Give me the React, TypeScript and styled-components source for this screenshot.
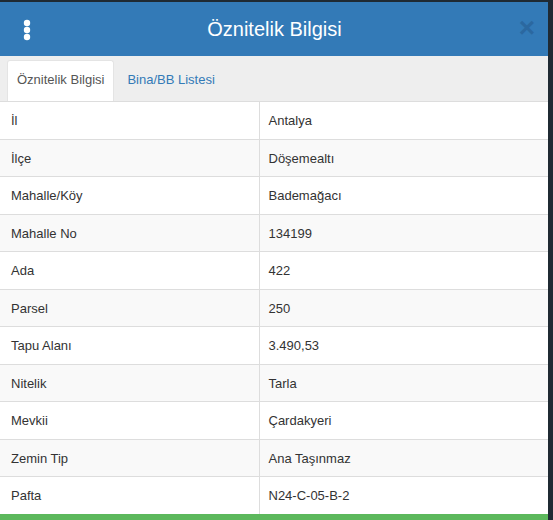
import React from 'react'
import styled, { createGlobalStyle } from 'styled-components'

const rows: [string, string][] = [
    ['İl', 'Antalya'],
    ['İlçe', 'Döşemealtı'],
    ['Mahalle/Köy', 'Bademağacı'],
    ['Mahalle No', '134199'],
    ['Ada', '422'],
    ['Parsel', '250'],
    ['Tapu Alanı', '3.490,53'],
    ['Nitelik', 'Tarla'],
    ['Mevkii', 'Çardakyeri'],
    ['Zemin Tip', 'Ana Taşınmaz'],
    ['Pafta', 'N24-C-05-B-2'],
]

const App: React.FC = () => {
    return (
        <>
            <GlobalStyle />
            <StModal>
                <StHeader>
                    <StMenuButton aria-label="menu">
                        <svg width="8" height="22" viewBox="0 0 8 22">
                            <circle cx="4" cy="4" r="3.2" fill="#fff" />
                            <circle cx="4" cy="11" r="3.2" fill="#fff" />
                            <circle cx="4" cy="18" r="3.2" fill="#fff" />
                        </svg>
                    </StMenuButton>
                    <StTitle>Öznitelik Bilgisi</StTitle>
                    <StClose aria-label="close">×</StClose>
                </StHeader>
                <StTabs>
                    <StTab $active>Öznitelik Bilgisi</StTab>
                    <StTab>Bina/BB Listesi</StTab>
                </StTabs>
                <StTable>
                    <tbody>
                        {rows.map(([k, v], i) => (
                            <StRow key={k} $striped={i % 2 === 1}>
                                <StKey>{k}</StKey>
                                <StValue>{v}</StValue>
                            </StRow>
                        ))}
                    </tbody>
                </StTable>
                <StFooter />
            </StModal>
        </>
    )
}

const GlobalStyle = createGlobalStyle`
    html, body {
        margin: 0;
        height: 100%;
        background: #1f2a33;
    }
    body, table {
        font-family: 'Liberation Sans', Arial, sans-serif;
    }
`

const StModal = styled.div`
    width: 548px;
    margin-top: 2px;
    background: #fff;
    display: flex;
    flex-direction: column;
    overflow: hidden;
`

const StHeader = styled.div`
    height: 54px;
    background: #337ab7;
    display: flex;
    align-items: center;
    padding: 0 8px 0 23px;
`

const StMenuButton = styled.div`
    width: 8px;
    display: flex;
    align-items: center;
    margin-top: 2px;
`

const StTitle = styled.div`
    flex: 1;
    text-align: center;
    color: #fff;
    font-size: 20px;
    padding-left: 4px;
`

const StClose = styled.div`
    width: 26px;
    text-align: center;
    color: #2b68a0;
    font-size: 28px;
    font-weight: bold;
    line-height: 1;
    margin-top: -2px;
`

const StTabs = styled.div`
    height: 45px;
    box-sizing: border-box;
    background: #eee;
    display: flex;
    align-items: flex-end;
    padding-left: 7px;
`

const StTab = styled.div<{ $active?: boolean }>`
    height: 41px;
    box-sizing: border-box;
    padding: 0 9px 3px;
    display: flex;
    align-items: center;
    font-size: 13px;
    color: ${(p) => (p.$active ? '#555' : '#337ab7')};
    background: ${(p) => (p.$active ? '#fff' : 'transparent')};
    border: 1px solid ${(p) => (p.$active ? '#e4e4e4' : 'transparent')};
    border-bottom: none;
    margin-right: 3px;
    border-radius: 3px 3px 0 0;
`

const StTable = styled.table`
    width: 100%;
    border-collapse: collapse;
    font-size: 13px;
    color: #333;
`

const StRow = styled.tr<{ $striped?: boolean }>`
    background: ${(p) => (p.$striped ? '#f9f9f9' : '#fff')};
`

const StKey = styled.td`
    width: 259px;
    box-sizing: border-box;
    padding: 9px 8px 7px 11px;
    line-height: 20.5px;
    border-top: 1px solid #ddd;
`

const StValue = styled.td`
    padding: 9px 9px 7px;
    line-height: 20.5px;
    border-top: 1px solid #ddd;
    border-left: 1px solid #ddd;
`

const StFooter = styled.div`
    height: 8px;
    background: #5cb85c;
`

export default App
